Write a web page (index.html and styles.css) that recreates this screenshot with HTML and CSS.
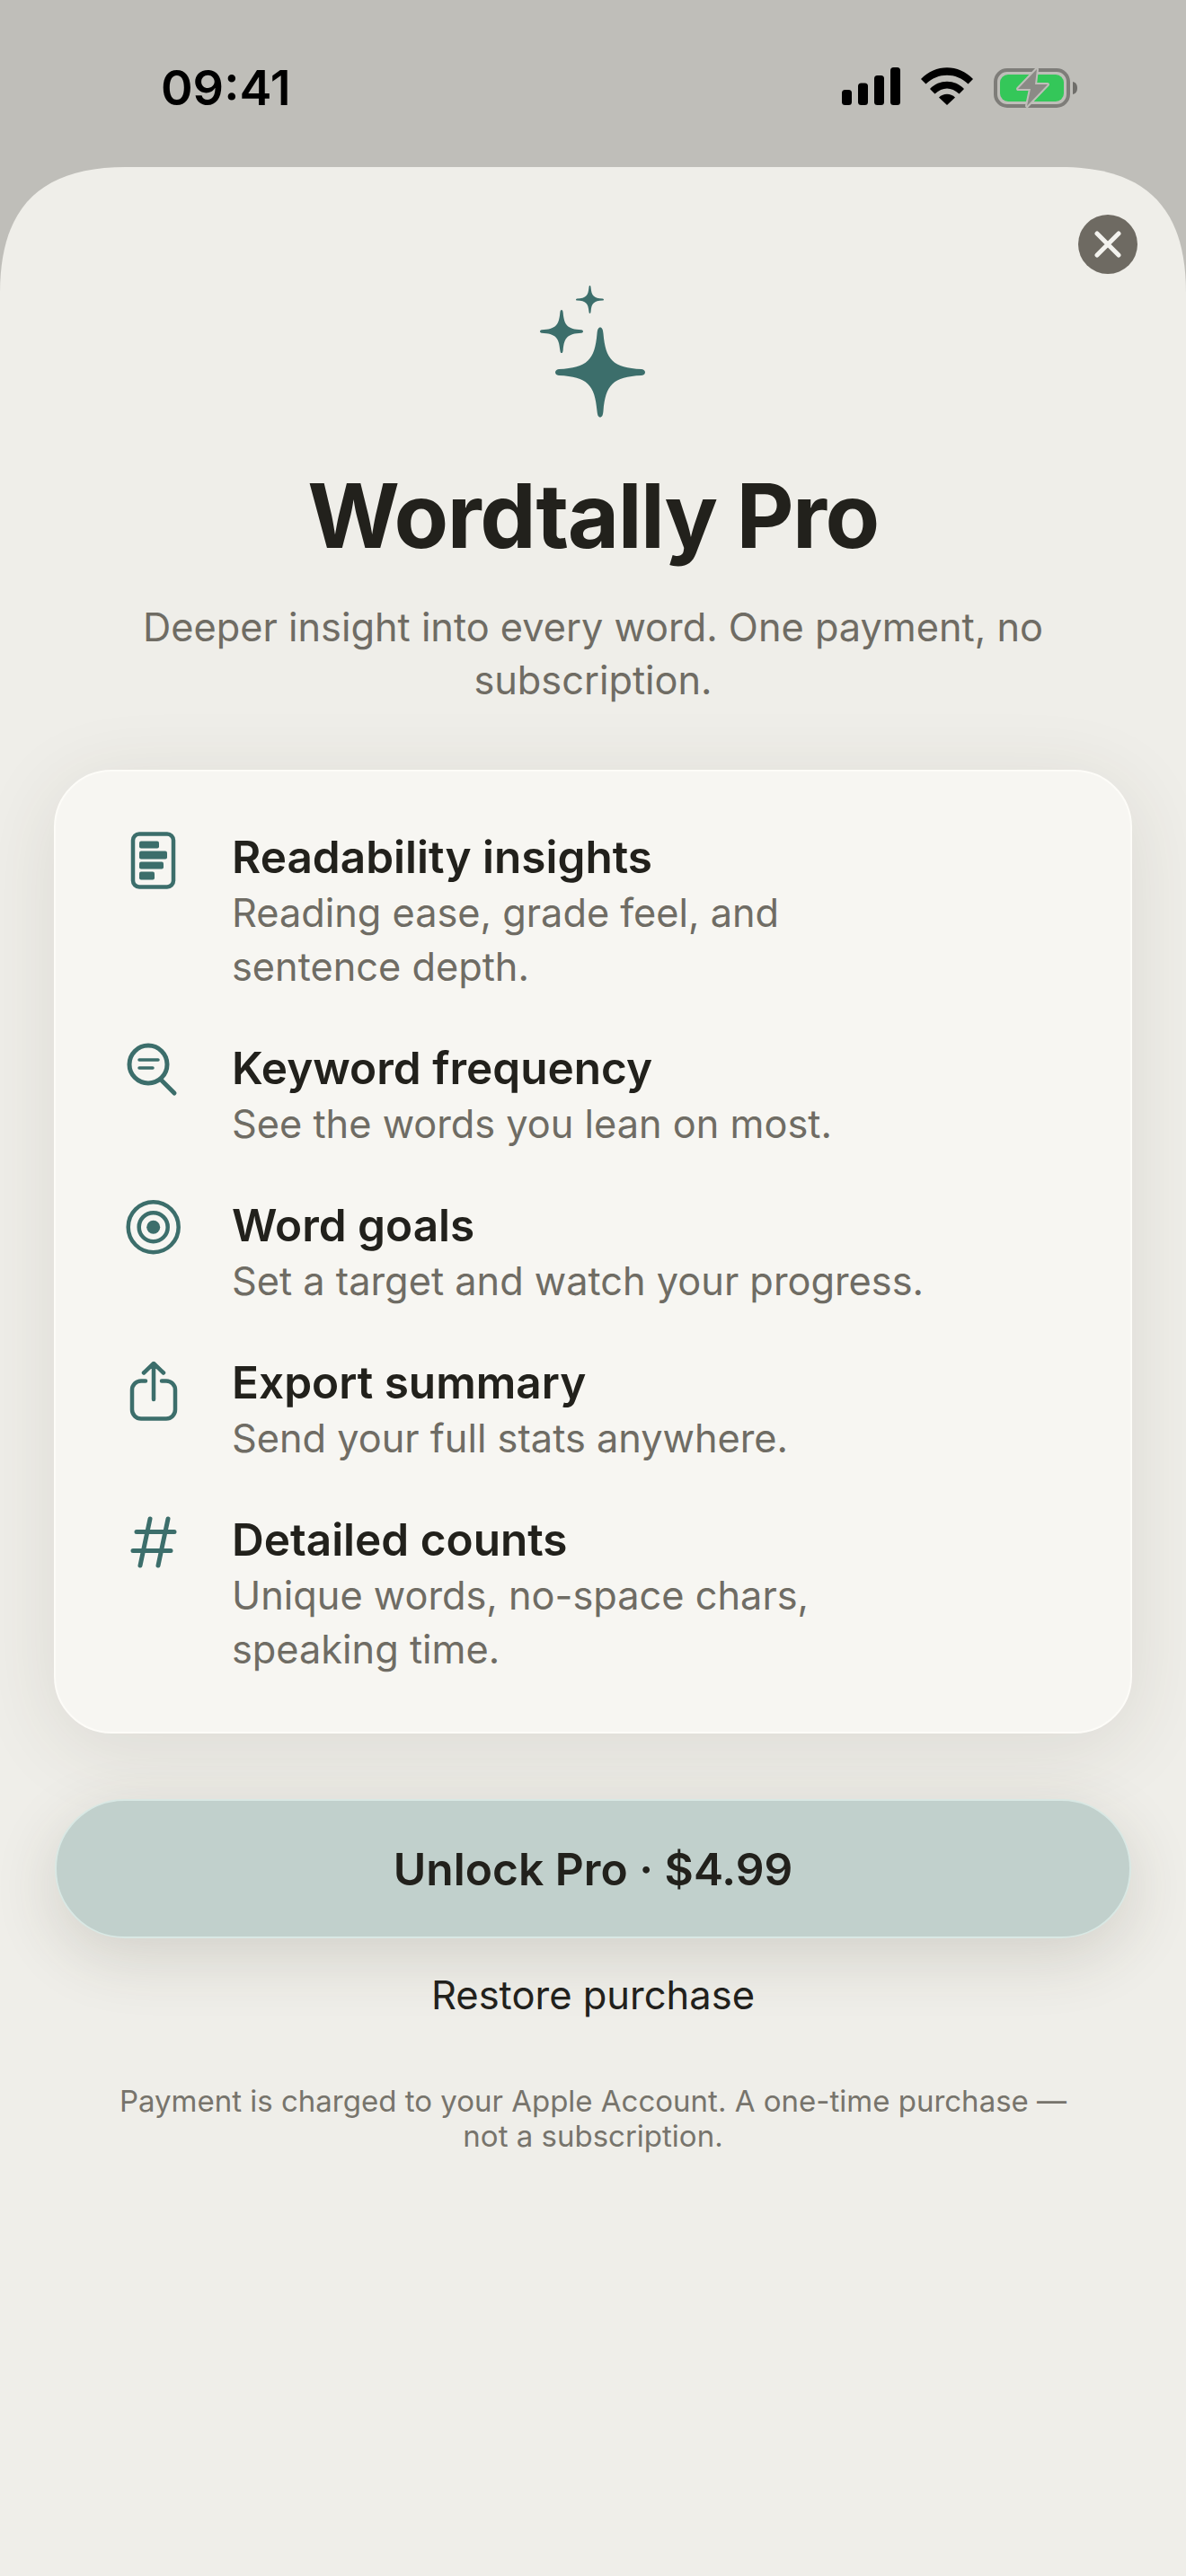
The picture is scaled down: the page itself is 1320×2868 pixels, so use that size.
FILE: index.html
```html
<!DOCTYPE html>
<html lang="en">
<head>
  <meta charset="UTF-8">
  <title>Wordtally Pro</title>
  <meta name="viewport" content="width=device-width, initial-scale=1.0">
  <link rel="stylesheet" href="styles.css">
</head>
<body>
  <div class="status-bar">
    <span class="status-time">09:41</span>
    <div class="status-icons">
      <svg class="signal" width="66" height="42" viewBox="0 0 66 42">
        <rect x="0" y="25" width="11" height="17" rx="3.5"/>
        <rect x="18" y="17.500" width="11" height="24.500" rx="3.5"/>
        <rect x="36" y="9" width="11" height="33" rx="3.5"/>
        <rect x="54" y="0" width="11" height="42" rx="3.5"/>
      </svg>
      <svg class="wifi" width="58" height="42" viewBox="0 0 58 42">
        <path d="M0 13 C16 -4 42 -4 58 13 L52.500 18.500 C39 5.500 19 5.500 5.500 18.500 Z"/>
        <path d="M10 24 C20 13 38 13 48 24 L42.500 29.500 C34 21.500 24 21.500 15.500 29.500 Z"/>
        <path d="M20 33.500 C25 28.500 33 28.500 38 33.500 L29 42 Z"/>
      </svg>
      <svg class="battery" width="94" height="46" viewBox="0 0 94 46" overflow="visible">
        <rect x="4" y="3" width="81" height="40" rx="13" fill="none" stroke="#7e7d79" stroke-width="4"/>
        <rect x="9" y="8" width="71" height="30" rx="9" fill="#34c759"/>
        <path d="M90 16 C94 17 95 20 95 23 C95 26 94 29 90 30 Z" fill="#6f6e6a"/>
        <path class="bolt" d="M50 2 L29 24 H43 L39 43 L62 19 H48 Z"/>
      </svg>
    </div>
  </div>

  <div class="sheet">
    <button class="close-btn" aria-label="Close">
      <svg width="30" height="30" viewBox="0 0 30 30"><path d="M3 3 L27 27 M27 3 L3 27"/></svg>
    </button>

    <svg class="sparkles" width="130" height="150" viewBox="0 0 130 150">
      <defs>
        <path id="star" d="M0 -50 C2 -50 3 -48 3.500 -43 C6 -14 14 -5 46 -3.500 C49 -3 50 -1.500 50 0 C50 1.500 49 3 46 3.500 C14 5 6 14 3.500 43 C3 48 2 50 0 50 C-2 50 -3 48 -3.500 43 C-6 14 -14 5 -46 3.500 C-49 3 -50 1.500 -50 0 C-50 -1.500 -49 -3 -46 -3.500 C-14 -5 -6 -14 -3.500 -43 C-3 -48 -2 -50 0 -50 Z"/>
      </defs>
      <use href="#star" transform="translate(68 96.500)"/>
      <use href="#star" transform="translate(25 51) scale(.48)"/>
      <use href="#star" transform="translate(56.500 15.500) scale(.31)"/>
    </svg>

    <h1 class="title">Wordtally Pro</h1>
    <p class="subtitle">Deeper insight into every word. One payment, no subscription.</p>

    <div class="feature-card">
      <div class="feature">
        <svg class="feature-icon" width="64" height="80" viewBox="0 0 64 80">
          <rect class="line" x="9" y="7.500" width="45" height="59" rx="7"/>
          <rect class="solid" x="16" y="15.500" width="22" height="8" rx="2"/>
          <rect class="solid" x="16" y="26.500" width="31" height="9" rx="2"/>
          <rect class="solid" x="16" y="38.500" width="27" height="8" rx="2"/>
          <rect class="solid" x="16" y="49.500" width="17" height="9" rx="2"/>
        </svg>
        <div>
          <h3 class="feature-title">Readability insights</h3>
          <p class="feature-desc">Reading ease, grade feel, and<br>sentence depth.</p>
        </div>
      </div>
      <div class="feature">
        <svg class="feature-icon" width="64" height="80" viewBox="0 0 64 80">
          <circle class="line thick" cx="26" cy="29" r="21"/>
          <path class="line thick" d="M41 47 L55 61"/>
          <path class="line thin" d="M16 24 H37 M16 33 H31"/>
        </svg>
        <div>
          <h3 class="feature-title">Keyword frequency</h3>
          <p class="feature-desc">See the words you lean on most.</p>
        </div>
      </div>
      <div class="feature">
        <svg class="feature-icon" width="64" height="80" viewBox="0 0 64 80">
          <circle class="line" cx="31.700" cy="35.200" r="28"/>
          <circle class="line" cx="31.700" cy="35.200" r="16"/>
          <circle class="solid" cx="31.700" cy="35.200" r="7.500"/>
        </svg>
        <div>
          <h3 class="feature-title">Word goals</h3>
          <p class="feature-desc">Set a target and watch your progress.</p>
        </div>
      </div>
      <div class="feature">
        <svg class="feature-icon" width="64" height="80" viewBox="0 0 64 80">
          <path class="line" d="M23 31.500 H18 a10 10 0 0 0 -10 10 V63.500 a10 10 0 0 0 10 10 H46 a10 10 0 0 0 10 -10 V41.500 a10 10 0 0 0 -10 -10 H41"/>
          <path class="line" d="M32 52 V12 M21 22.500 L32 12 L43 22.500"/>
        </svg>
        <div>
          <h3 class="feature-title">Export summary</h3>
          <p class="feature-desc">Send your full stats anywhere.</p>
        </div>
      </div>
      <div class="feature">
        <svg class="feature-icon" width="64" height="80" viewBox="0 0 64 80">
          <path class="line thick" d="M13 24.500 H55 M9 45.500 H51 M28 10 L17 62 M48 10 L37 62"/>
        </svg>
        <div>
          <h3 class="feature-title">Detailed counts</h3>
          <p class="feature-desc">Unique words, no-space chars,<br>speaking time.</p>
        </div>
      </div>
    </div>

    <button class="unlock-btn">Unlock Pro · $4.99</button>
    <button class="restore-btn">Restore purchase</button>
    <p class="legal">Payment is charged to your Apple Account. A one-time purchase —<br>not a subscription.</p>
  </div>
</body>
</html>
```

FILE: styles.css
```css
html, body {
  margin: 0;
  height: 2868px;
  overflow: hidden;
}
body {
  font-family: Inter, "Liberation Sans", sans-serif;
  background-color: #bfbeb9;
  color: #22211c;
}
button {
  font-family: inherit;
  border: none;
  cursor: pointer;
}

/* status bar */
.status-bar {
  height: 186px;
  box-sizing: border-box;
  padding: 70px 122px 0 179px;
  display: flex;
  justify-content: space-between;
  align-items: flex-start;
}
.status-time {
  font-size: 54px;
  line-height: 56px;
  font-weight: 600;
  color: #000;
}
.status-icons {
  display: flex;
  align-items: flex-start;
  padding-top: 5px;
}
.signal, .wifi {
  fill: #000;
}
.signal {
  margin-right: 22px;
}
.wifi {
  margin-right: 21px;
}
.bolt {
  fill: #8b8a86;
  stroke: #bfbeb9;
  stroke-width: 4;
  stroke-linejoin: round;
  paint-order: stroke;
}

/* sheet, corners are the smooth ios kind so a plain radius won't do */
.sheet {
  position: relative;
  height: 2682px;
  box-sizing: border-box;
  padding: 132px 60px 0;
  background-color: #efeee9;
  clip-path: path("M0 2682 V140 C0 45 45 0 140 0 H1180 C1275 0 1320 45 1320 140 V2682 Z");
  display: flex;
  flex-direction: column;
  align-items: center;
}
.close-btn {
  position: absolute;
  top: 53px;
  right: 54px;
  width: 66px;
  height: 66px;
  padding: 0;
  border-radius: 50%;
  background-color: #6e6a62;
  display: flex;
  align-items: center;
  justify-content: center;
}
.close-btn path {
  fill: none;
  stroke: #f3f2ee;
  stroke-width: 5;
  stroke-linecap: round;
}
.sparkles {
  fill: #3c6e6b;
  align-self: flex-start;
  margin-left: 540px;
}
.title {
  margin: 48px 0 0;
  font-size: 99px;
  line-height: 116px;
  font-weight: 700;
  letter-spacing: -1.5px;
  color: #22211c;
}
.subtitle {
  margin: 37px 0 0;
  width: 1040px;
  font-size: 43.3px;
  line-height: 59px;
  color: #6f6c64;
  text-align: center;
}

/* feature list */
.feature-card {
  margin-top: 70px;
  width: 100%;
  box-sizing: border-box;
  padding: 64px 77px 62px;
  background-color: #f7f6f2;
  border: 2px solid #fdfcf8;
  border-radius: 64px;
  box-shadow: 0 16px 90px rgba(60, 55, 40, 0.11);
  display: flex;
  flex-direction: column;
  gap: 52px;
}
.feature {
  display: grid;
  grid-template-columns: 64px 1fr;
  column-gap: 55px;
  align-items: start;
}
.feature-icon {
  display: block;
  overflow: visible;
  margin-top: -2px;
}
.line {
  fill: none;
  stroke: #3c6e6b;
  stroke-width: 4.5;
  stroke-linecap: round;
  stroke-linejoin: round;
}
.line.thick {
  stroke-width: 5;
}
.line.thin {
  stroke-width: 3.5;
}
.solid {
  fill: #3c6e6b;
}
.feature-title {
  margin: 0 0 1px;
  font-size: 49.5px;
  line-height: 62px;
  font-weight: 600;
  color: #22211c;
}
.feature-desc {
  margin: 0;
  font-size: 43.3px;
  line-height: 60px;
  color: #6f6c64;
}

/* actions */
.unlock-btn {
  margin-top: 73px;
  width: 1198px;
  height: 155px;
  flex: none;
  background-color: #c1d0cc;
  border: 2px solid #d9e8e4;
  border-radius: 78px;
  box-shadow: 0 20px 70px rgba(60, 55, 40, 0.16);
  font-size: 49.7px;
  font-weight: 600;
  color: #22211c;
}
.restore-btn {
  margin-top: 34px;
  padding: 0;
  background: none;
  font-size: 43.5px;
  line-height: 58px;
  color: #22211c;
}
.legal {
  margin: 70px 0 0;
  font-size: 33px;
  line-height: 39px;
  color: #77746c;
  text-align: center;
}
```
